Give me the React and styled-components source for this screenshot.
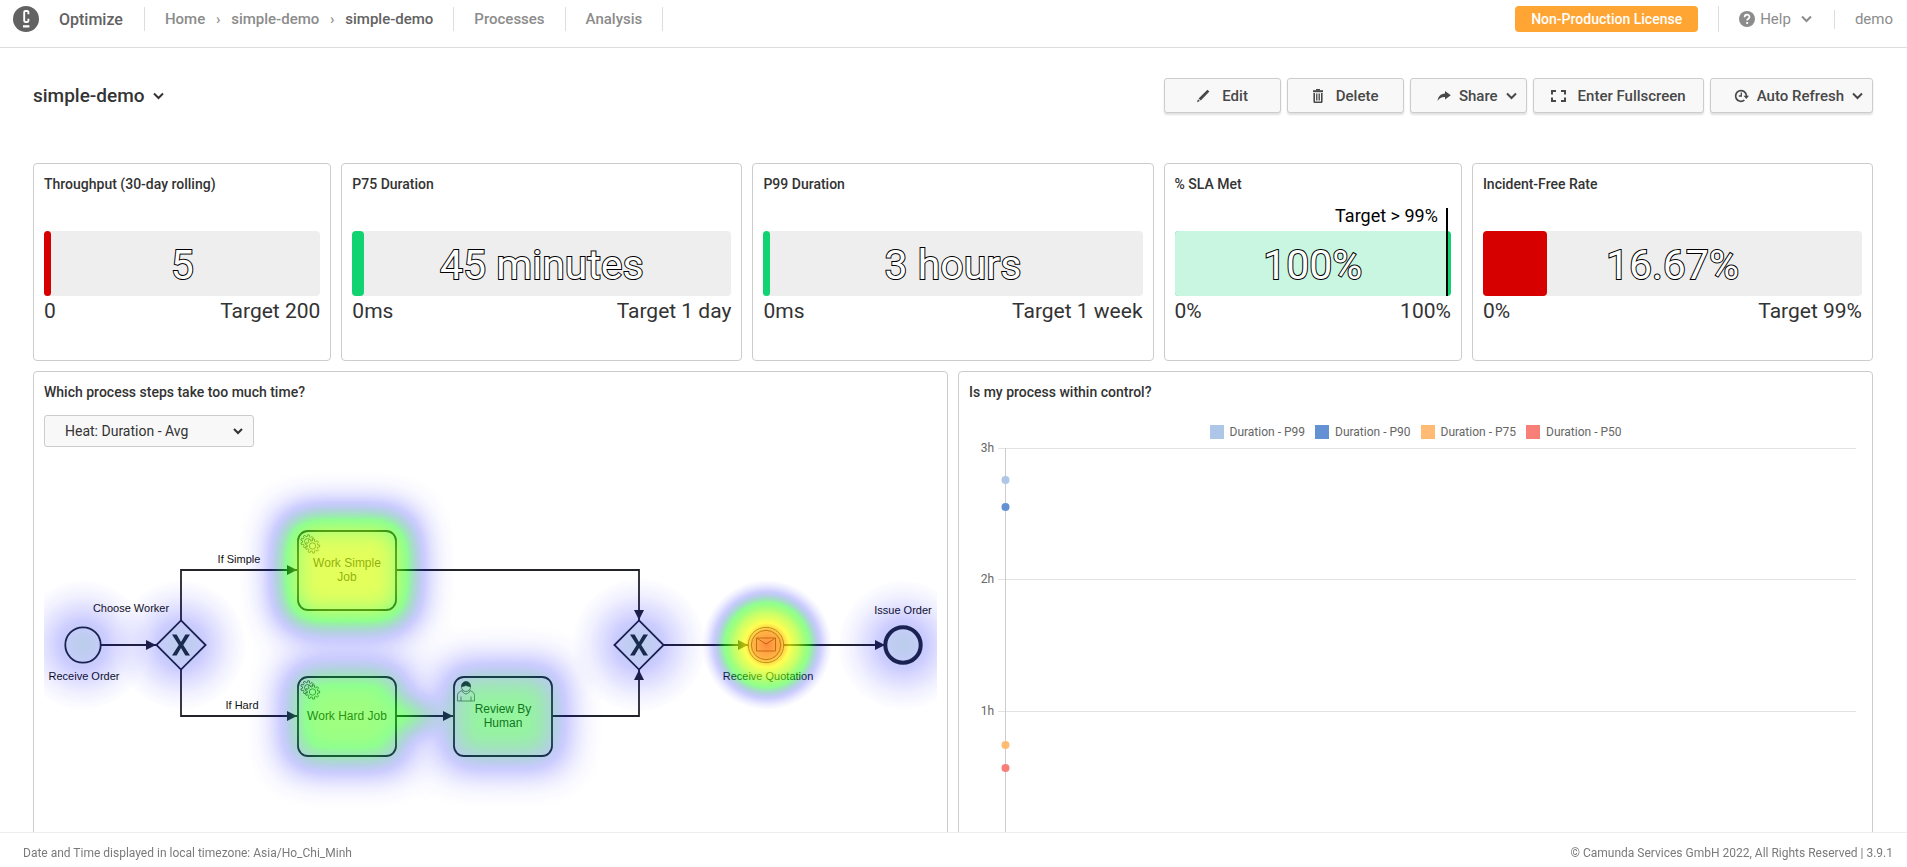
import React from "react";
import styled, { createGlobalStyle } from "styled-components";

const GlobalStyle = createGlobalStyle`
  *, *::before, *::after { box-sizing: border-box; }
  body {
    margin: 0;
    background: #fff;
    color: #333;
    font-family: Roboto, "Liberation Sans", sans-serif;
    font-size: 14px;
  }
  button, select { font-family: inherit; color: inherit; }
  h1, h2, p { margin: 0; }
`;

const Shell = styled.div`
  display: flex;
  flex-direction: column;
  height: 100vh;
`;

/* ---------- header ---------- */

const Header = styled.header`
  display: flex;
  flex: none;
  justify-content: space-between;
  align-items: flex-start;
  height: 48px;
  padding: 6px 14px 0 13px;
  border-bottom: 1px solid #ddd;
`;

const HeaderSide = styled.div`
  display: flex;
  align-items: center;
`;

const Brand = styled.a`
  display: flex;
  align-items: center;
  gap: 20px;
  padding-right: 21px;
  color: #626262;
  font-size: 16px;
  font-weight: 500;
  text-decoration: none;
`;

const NavGroup = styled.nav`
  display: flex;
  align-items: center;
  height: 24px;
  padding: 0 20px;
  border-left: 1px solid #ddd;
  color: #8c8c8c;
  font-size: 15px;
  font-weight: 500;
`;

const NavLink = styled.a`
  color: ${(p) => (p.$current ? "#626262" : "#8c8c8c")};
  text-decoration: none;
`;

const Crumb = styled.span`
  width: 26px;
  text-align: center;
`;

const License = styled.span`
  display: flex;
  align-items: center;
  height: 26px;
  margin-right: 20px;
  padding: 0 16px;
  border-radius: 4px;
  background: #ffa533;
  color: #fff;
  font-size: 14px;
  font-weight: 500;
`;

const MenuButton = styled.button`
  display: flex;
  align-items: center;
  gap: 5px;
  height: ${(p) => p.$height}px;
  padding: 0 0 0 20px;
  border: 0;
  border-left: 1px solid #ddd;
  background: none;
  color: #8c8c8c;
  font-size: 15px;
`;

const MenuChevron = styled.span`
  display: flex;
  padding: 0 22px 0 5px;
`;

/* ---------- toolbar ---------- */

const Main = styled.main`
  flex: 1;
  min-height: 0;
  overflow: auto;
  scrollbar-width: none;
  padding: 30px 34px 20px 33px;
`;

const Toolbar = styled.div`
  display: flex;
  justify-content: space-between;
  align-items: center;
  margin-bottom: 50px;
`;

const TitleButton = styled.button`
  display: flex;
  align-items: center;
  gap: 8px;
  padding: 0;
  border: 0;
  background: none;
`;

const Title = styled.h1`
  font-size: 19px;
  font-weight: 500;
`;

const Actions = styled.div`
  display: flex;
  gap: 6px;
`;

const ActionButton = styled.button`
  display: flex;
  justify-content: ${(p) => (p.$menu ? "flex-end" : "center")};
  align-items: center;
  gap: ${(p) => (p.$menu ? 8 : 12)}px;
  min-width: 117px;
  height: 35px;
  padding: ${(p) => (p.$menu ? "0 9px 0 23px" : "0 17px")};
  border: 1px solid #ccc;
  border-radius: 3px;
  background: #f8f8f8;
  box-shadow: 0 2px 2px rgba(0, 0, 0, 0.12);
  color: #484848;
  font-size: 15px;
  font-weight: 500;
  white-space: nowrap;
`;

/* ---------- report tiles ---------- */

const Grid = styled.div`
  display: grid;
  grid-template-columns: repeat(18, minmax(0, 1fr));
  grid-template-rows: 198px;
  gap: 10px;
`;

const Tile = styled.section`
  grid-column: span ${(p) => p.$span};
  min-width: 0;
  padding: 11px 10px;
  border: 1px solid #ccc;
  border-radius: 4px;
`;

const TileTitle = styled.h2`
  color: #333;
  font-size: 14px;
  font-weight: 500;
  line-height: 18px;
`;

const Gauge = styled.div`
  position: relative;
  display: flex;
  justify-content: center;
  align-items: center;
  height: 65px;
  margin-top: 38px;
  padding-top: 3px;
  border-radius: 4px;
  background: #eee;
`;

const Fill = styled.div`
  position: absolute;
  top: 0;
  bottom: 0;
  left: 0;
  border-radius: 4px;
  background: ${(p) => p.$color};
`;

const Remaining = styled.div`
  position: absolute;
  top: 0;
  bottom: 0;
  left: 0;
  border-radius: 4px 0 0 4px;
  background: #c9f6e0;
`;

const TargetMark = styled.div`
  position: absolute;
  top: -23px;
  right: 3px;
  bottom: 0;
  padding-right: 8px;
  border-right: 2px solid #000;
  color: #000;
  font-size: 18px;
  line-height: 16px;
`;

const GaugeValue = styled.span`
  position: relative;
  color: #fff;
  font-size: 41px;
  -webkit-text-stroke: 2px #000;
  paint-order: stroke fill;
`;

const Range = styled.div`
  display: flex;
  justify-content: space-between;
  font-size: 21px;
  line-height: 30px;
`;

const HeatSelect = styled.select`
  display: block;
  width: 210px;
  height: 32px;
  margin-top: 14px;
  padding: 0 20px;
  border: 1px solid #ccc;
  border-radius: 3px;
  appearance: none;
  background: #f8f8f8
    url("data:image/svg+xml,%3Csvg xmlns='http://www.w3.org/2000/svg' width='10' height='7' fill='none' stroke='%23333' stroke-width='2'%3E%3Cpath d='M1 1l4 4 4-4'/%3E%3C/svg%3E")
    no-repeat right 10px center;
  font-size: 14px;
`;

const Diagram = styled.svg`
  display: block;
  width: 100%;
  height: auto;
  margin-top: 14px;
  font-family: "Liberation Sans", Arial, sans-serif;
`;

const Legend = styled.ul`
  display: flex;
  justify-content: center;
  gap: 10px;
  margin: 24px 0 0;
  padding: 0;
  list-style: none;
  color: #666;
  font-size: 12px;
  line-height: 14px;
`;

const LegendItem = styled.li`
  display: flex;
  gap: 6px;

  &::before {
    content: "";
    width: 14px;
    height: 14px;
    background: ${(p) => p.$color};
  }
`;

const Chart = styled.svg`
  display: block;
  width: 100%;
  height: 420px;
`;

const Footer = styled.footer`
  display: flex;
  flex: none;
  justify-content: space-between;
  align-items: center;
  height: 35px;
  padding: 6px 14px 0 23px;
  border-top: 1px solid #eee;
  color: #7a7a7a;
  font-size: 12px;
`;

/* ---------- icons ---------- */

const Chevron = () => (
  <svg width="11" height="8" viewBox="0 0 11 8" fill="none" stroke="currentColor" strokeWidth="2" aria-hidden="true">
    <path d="M1 1.5l4.5 4.5L10 1.5" />
  </svg>
);

const Logo = () => (
  <svg width="26" height="26" viewBox="0 0 26 26" aria-hidden="true">
    <circle cx="13" cy="13" r="13" fill="#626262" />
    <path d="M15.4 8.2V6.2a1.2 1.2 0 0 0-1.2-1.2h-1.800a1.2 1.2 0 0 0-1.2 1.2v8.600a1.2 1.2 0 0 0 1.2 1.2h1.800a1.2 1.2 0 0 0 1.2-1.2v-2" fill="none" stroke="#fff" strokeWidth="1.9" />
    <path d="M10 19.200h6.400v2.300H10z" fill="#fff" />
  </svg>
);

const HelpIcon = () => (
  <svg width="16" height="16" viewBox="0 0 16 16" aria-hidden="true">
    <circle cx="8" cy="8" r="8" fill="#8c8c8c" />
    <path d="M5.6 6.2c0-3.4 5-3.2 4.9-.2 0 1.700-2.400 1.800-2.400 3.500" fill="none" stroke="#fff" strokeWidth="1.700" />
    <path d="M7.200 11h1.900v1.900H7.200z" fill="#fff" />
  </svg>
);

const EditIcon = () => (
  <svg width="14" height="14" viewBox="0 0 14 14" fill="currentColor" aria-hidden="true">
    <path d="M11.400.8l2 1.700-8.600 9-2.200-1.900zM2 10.300l1.900 1.700-2.900 1.300z" />
  </svg>
);

const TrashIcon = () => (
  <svg width="12" height="14" viewBox="0 0 12 14" fill="none" stroke="currentColor" aria-hidden="true">
    <path d="M1 2.200h10" strokeWidth="2" />
    <path d="M4 .7h4" strokeWidth="1.400" />
    <path d="M2.200 4v8.500q0 .8.800.8h6q.800 0 .800-.8V4" strokeWidth="1.600" />
    <path d="M4.500 4.500v7M6 4.500v7M7.500 4.500v7" strokeWidth=".9" />
  </svg>
);

const ShareIcon = () => (
  <svg width="14" height="12" viewBox="0 0 14 12" fill="currentColor" aria-hidden="true">
    <path d="M8 1l5.800 4.200L8 9.400V7C4.500 6.900 2.300 8.300.500 11 1 6.500 3.500 3.600 8 3.400z" />
  </svg>
);

const FullscreenIcon = () => (
  <svg width="15" height="12" viewBox="0 0 15 12" fill="none" stroke="currentColor" strokeWidth="2" aria-hidden="true">
    <path d="M5 1H1v3.500M10 1h4v3.500M5 11H1V7.500M10 11h4V7.500" />
  </svg>
);

const RefreshIcon = () => (
  <svg width="15" height="14" viewBox="0 0 15 14" fill="none" stroke="currentColor" strokeWidth="1.700" aria-hidden="true">
    <path d="M12.400 8V6.500a5.400 5.400 0 1 0-2 4.700" />
    <path d="M7.300 3.500V7H4.800" strokeWidth="1.300" />
    <path d="M9.600 6.700h5.400l-2.700 3.200z" fill="currentColor" stroke="none" />
  </svg>
);

/* ---------- gauges ---------- */

const RED = "#d60000";
const GREEN = "#12d372";

const gauges = [
  { title: "Throughput (30-day rolling)", span: 3, value: "5", percent: 2.5, color: RED, min: "0", max: "Target 200" },
  { title: "P75 Duration", span: 4, value: "45 minutes", percent: 3.13, color: GREEN, min: "0ms", max: "Target 1 day" },
  { title: "P99 Duration", span: 4, value: "3 hours", percent: 1.79, color: GREEN, min: "0ms", max: "Target 1 week" },
  { title: "% SLA Met", span: 3, value: "100%", percent: 100, color: GREEN, min: "0%", max: "100%", target: "Target > 99%", targetAt: 99 },
  { title: "Incident-Free Rate", span: 4, value: "16.67%", percent: 16.84, color: RED, min: "0%", max: "Target 99%" },
];

const GaugeTile = ({ gauge }) => (
  <Tile $span={gauge.span}>
    <TileTitle>{gauge.title}</TileTitle>
    <Gauge>
      <Fill $color={gauge.color} style={{ width: `${gauge.percent}%` }} />
      {gauge.target && (
        <>
          <Remaining style={{ width: `${gauge.targetAt}%` }} />
          <TargetMark>{gauge.target}</TargetMark>
        </>
      )}
      <GaugeValue>{gauge.value}</GaugeValue>
    </Gauge>
    <Range>
      <span>{gauge.min}</span>
      <span>{gauge.max}</span>
    </Range>
  </Tile>
);

/* ---------- process diagram with heat overlay ---------- */

const gearPath = (cx, cy, inner, outer, teeth) => {
  const step = (Math.PI * 2) / teeth;
  const points = [];
  for (let i = 0; i < teeth; i += 1) {
    [
      [-0.3, inner],
      [-0.2, outer],
      [0.2, outer],
      [0.3, inner],
    ].forEach(([turn, r]) => {
      const a = (i + turn) * step;
      points.push(`${(cx + r * Math.cos(a)).toFixed(2)} ${(cy + r * Math.sin(a)).toFixed(2)}`);
    });
  }
  return `M${points.join("L")}Z`;
};

const Gears = ({ x, y }) => (
  <g transform={`translate(${x} ${y})`} fill="#fff" stroke="#22242a" strokeWidth=".7">
    <path d={gearPath(7.5, 7.5, 5, 6.8, 9)} />
    <circle cx="7.5" cy="7.5" r="3" />
    <path d={gearPath(12.5, 12, 5.2, 7.2, 9)} />
    <circle cx="12.5" cy="12" r="3.2" />
  </g>
);

const Person = ({ x, y }) => (
  <g transform={`translate(${x} ${y})`} fill="none" stroke="#22242a" strokeWidth=".6">
    <path d="M5.200 9.500C2 10.700.600 12 .500 14.500V20h17v-5.500c0-2.500-1.500-3.800-4.600-5M4 20v-4.500M14 20v-4.500M5.200 9.500c1 4.500 6.500 4.500 7.700 0" />
    <circle cx="9" cy="6" r="4.500" />
    <path d="M4.600 5.500C4.200-1 13.800-1.200 13.500 5.500 11 5.800 10 4.800 9 4.300 8 5 6.500 5.600 4.600 5.500z" fill="#22242a" />
  </g>
);

const Gateway = ({ x }) => (
  <g transform={`translate(${x} 184)`}>
    <path d="M0-24.600L24.600 0 0 24.600-24.600 0z" fill="#fff" stroke="#22242a" strokeWidth="1.8" />
    <path d="M-9-10.500h4.600L0-3 4.400-10.500H9L2.300 0 9 10.500H4.400L0 3-4.400 10.500H-9L-2.300 0z" fill="#22242a" />
  </g>
);

const Task = ({ x, y }) => (
  <rect x={x} y={y} width="98" height="79" rx="10" fill="#fff" stroke="#22242a" strokeWidth="1.8" />
);

const ProcessDiagram = () => (
  <Diagram viewBox="0 0 893 400" role="img" aria-label="Process heatmap">
    <defs>
      <marker id="arrow" viewBox="0 0 10 10" refX="10" refY="5" markerWidth="10" markerHeight="10" markerUnits="userSpaceOnUse" orient="auto">
        <path d="M0 0l10 5-10 5z" fill="#22242a" />
      </marker>
      <radialGradient id="cool">
        <stop offset="0" stopOpacity=".34" />
        <stop offset=".3" stopOpacity=".28" />
        <stop offset=".5" stopOpacity=".18" />
        <stop offset=".75" stopOpacity=".07" />
        <stop offset="1" stopOpacity="0" />
      </radialGradient>
      <radialGradient id="hot">
        <stop offset="0" stopOpacity=".94" />
        <stop offset=".22" stopOpacity=".91" />
        <stop offset=".36" stopOpacity=".84" />
        <stop offset=".5" stopOpacity=".74" />
        <stop offset=".65" stopOpacity=".56" />
        <stop offset=".75" stopOpacity=".38" />
        <stop offset=".84" stopOpacity=".22" />
        <stop offset=".92" stopOpacity=".09" />
        <stop offset="1" stopOpacity="0" />
      </radialGradient>
      <filter id="soft" filterUnits="userSpaceOnUse" x="100" y="-20" width="500" height="440">
        <feGaussianBlur stdDeviation="18" />
      </filter>
      <filter id="bridge" filterUnits="userSpaceOnUse" x="300" y="180" width="160" height="140">
        <feGaussianBlur stdDeviation="10" />
      </filter>
      <filter id="heat" filterUnits="userSpaceOnUse" x="0" y="0" width="893" height="400" colorInterpolationFilters="sRGB">
        <feColorMatrix values="0 0 0 1 0  0 0 0 1 0  0 0 0 1 0  0 0 0 1 0" />
        <feComponentTransfer>
          <feFuncR type="table" tableValues="0 0 0 0 0 0 0 0 0 0 0 0 .17 .33 .5 .67 .83 1 1 1 1" />
          <feFuncG type="table" tableValues="0 0 0 0 0 0 .17 .33 .5 .67 .83 1 1 1 1 1 1 1 .67 .33 0" />
          <feFuncB type="table" tableValues="1 1 1 1 1 1 .83 .67 .5 .33 .17 0 0 0 0 0 0 0 0 0 0" />
          <feFuncA type="linear" slope=".8" />
        </feComponentTransfer>
      </filter>
    </defs>

    <g fill="none" stroke="#22242a" strokeWidth="1.8">
      <path d="M57 184h55" markerEnd="url(#arrow)" />
      <path d="M137 159v-50h116" markerEnd="url(#arrow)" />
      <path d="M137 209v46h116" markerEnd="url(#arrow)" />
      <path d="M352 109h243v50" markerEnd="url(#arrow)" />
      <path d="M352 255h57" markerEnd="url(#arrow)" />
      <path d="M508 255h87v-46" markerEnd="url(#arrow)" />
      <path d="M620 184h84" markerEnd="url(#arrow)" />
      <path d="M740 184h101" markerEnd="url(#arrow)" />
    </g>

    <circle cx="39" cy="184" r="17.700" fill="#fff" stroke="#22242a" strokeWidth="1.8" />
    <Gateway x={137} />
    <Task x={254} y={70} />
    <Task x={254} y={216} />
    <Task x={410} y={216} />
    <Gears x={256} y={73} />
    <Gears x={256} y={219} />
    <Person x={413} y={220} />
    <Gateway x={595} />
    <g fill="#fff" stroke="#22242a">
      <circle cx="722" cy="184" r="17.700" />
      <circle cx="722" cy="184" r="14.700" />
      <path d="M712.500 177h19v13h-19zM712.500 177l9.500 6 9.500-6" />
    </g>
    <circle cx="859" cy="184" r="17.700" fill="#fff" stroke="#22242a" strokeWidth="4" />

    <g fill="#111" fontSize="11" textAnchor="middle">
      <text x="195" y="102">If Simple</text>
      <text x="87" y="151">Choose Worker</text>
      <text x="40" y="219">Receive Order</text>
      <text x="198" y="248">If Hard</text>
      <text x="724" y="219">Receive Quotation</text>
      <text x="859" y="153">Issue Order</text>
    </g>
    <g fill="#22242a" fontSize="12" textAnchor="middle">
      <text x="303" y="106">Work Simple</text>
      <text x="303" y="120">Job</text>
      <text x="303" y="259">Work Hard Job</text>
      <text x="459" y="252">Review By</text>
      <text x="459" y="266">Human</text>
    </g>

    <g filter="url(#heat)">
      <circle cx="39" cy="184" r="66" fill="url(#cool)" />
      <circle cx="137" cy="184" r="66" fill="url(#cool)" />
      <circle cx="595" cy="184" r="68" fill="url(#cool)" />
      <circle cx="859" cy="184" r="66" fill="url(#cool)" />
      <circle cx="723" cy="184" r="65" fill="url(#hot)" />
      <g filter="url(#soft)">
        <rect x="234" y="50" width="138" height="119" rx="26" fillOpacity=".8" />
      </g>
      <g filter="url(#soft)">
        <rect x="241" y="203" width="124" height="105" rx="18" fillOpacity=".62" />
      </g>
      <g filter="url(#soft)">
        <rect x="397" y="203" width="124" height="105" rx="18" fillOpacity=".52" />
      </g>
      <ellipse cx="371" cy="255" rx="24" ry="16" fillOpacity=".36" filter="url(#bridge)" />
    </g>
  </Diagram>
);

/* ---------- control chart ---------- */

const series = [
  { name: "Duration - P99", color: "#aec6e8", y: 41 },
  { name: "Duration - P90", color: "#6391d2", y: 68 },
  { name: "Duration - P75", color: "#ffbb73", y: 306 },
  { name: "Duration - P50", color: "#f77f77", y: 329 },
];

const ticks = [
  { label: "3h", y: 9 },
  { label: "2h", y: 140 },
  { label: "1h", y: 272 },
];

const ControlChart = () => (
  <>
    <Legend>
      {series.map((s) => (
        <LegendItem key={s.name} $color={s.color}>
          {s.name}
        </LegendItem>
      ))}
    </Legend>
    <Chart role="img" aria-label="Duration percentiles">
      <svg x="-6" width="100%" height="100%" overflow="visible">
        {ticks.map((t) => (
          <g key={t.label}>
            <line x1="35" x2="100%" y1={t.y + 0.5} y2={t.y + 0.5} stroke="#e2e2e2" />
            <text x="31" y={t.y + 4} textAnchor="end" fontSize="12" fill="#666">
              {t.label}
            </text>
          </g>
        ))}
        <line x1="42.500" x2="42.500" y1="9" y2="404" stroke="#ccc" />
        {series.map((s) => (
          <circle key={s.name} cx="42.5" cy={s.y} r="4" fill={s.color} />
        ))}
      </svg>
    </Chart>
  </>
);

export default function App() {
  return (
    <Shell>
      <GlobalStyle />
      <Header>
        <HeaderSide>
          <Brand href="#home">
            <Logo />
            Optimize
          </Brand>
          <NavGroup aria-label="Breadcrumb">
            <NavLink href="#home">Home</NavLink>
            <Crumb>›</Crumb>
            <NavLink href="#collection">simple-demo</NavLink>
            <Crumb>›</Crumb>
            <NavLink href="#dashboard" $current>
              simple-demo
            </NavLink>
          </NavGroup>
          <NavGroup as="div">
            <NavLink href="#processes">Processes</NavLink>
          </NavGroup>
          <NavGroup as="div">
            <NavLink href="#analysis">Analysis</NavLink>
          </NavGroup>
          <NavGroup as="div" />
        </HeaderSide>
        <HeaderSide>
          <License>Non-Production License</License>
          <MenuButton $height={26}>
            <HelpIcon />
            Help
            <MenuChevron>
              <Chevron />
            </MenuChevron>
          </MenuButton>
          <MenuButton $height={19}>demo</MenuButton>
        </HeaderSide>
      </Header>

      <Main>
        <Toolbar>
          <TitleButton>
            <Title>simple-demo</Title>
            <Chevron />
          </TitleButton>
          <Actions>
            <ActionButton>
              <EditIcon />
              Edit
            </ActionButton>
            <ActionButton>
              <TrashIcon />
              Delete
            </ActionButton>
            <ActionButton $menu>
              <ShareIcon />
              Share
              <Chevron />
            </ActionButton>
            <ActionButton>
              <FullscreenIcon />
              Enter Fullscreen
            </ActionButton>
            <ActionButton $menu>
              <RefreshIcon />
              Auto Refresh
              <Chevron />
            </ActionButton>
          </Actions>
        </Toolbar>

        <Grid>
          {gauges.map((g) => (
            <GaugeTile key={g.title} gauge={g} />
          ))}
          <Tile $span={9}>
            <TileTitle>Which process steps take too much time?</TileTitle>
            <HeatSelect aria-label="Heatmap measure" defaultValue="avg">
              <option value="avg">Heat: Duration - Avg</option>
            </HeatSelect>
            <ProcessDiagram />
          </Tile>
          <Tile $span={9}>
            <TileTitle>Is my process within control?</TileTitle>
            <ControlChart />
          </Tile>
        </Grid>
      </Main>

      <Footer>
        <p>Date and Time displayed in local timezone: Asia/Ho_Chi_Minh</p>
        <p>© Camunda Services GmbH 2022, All Rights Reserved | 3.9.1</p>
      </Footer>
    </Shell>
  );
}
